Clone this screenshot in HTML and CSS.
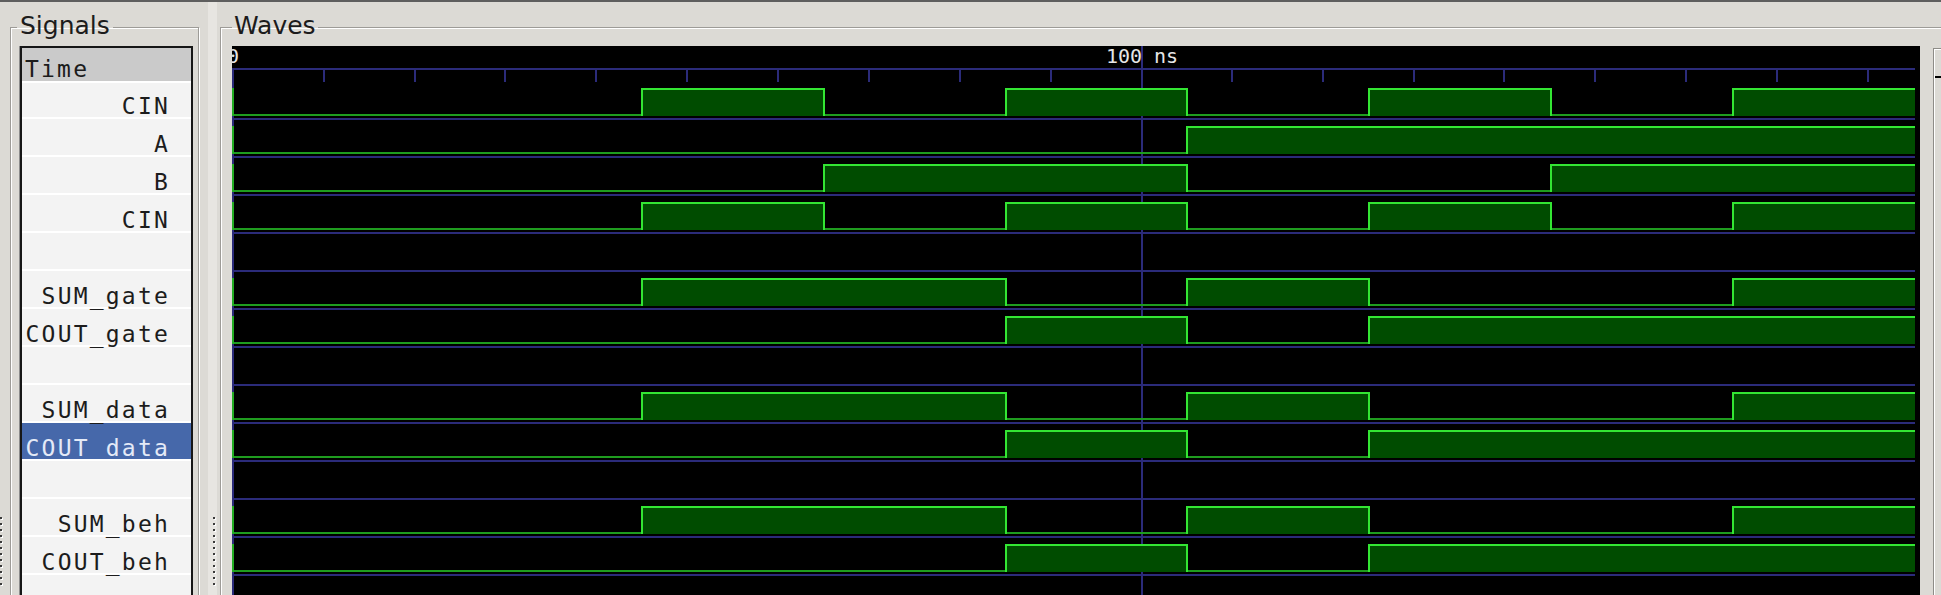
FILE: index.html
```html
<!DOCTYPE html>
<html>
<head>
<meta charset="utf-8">
<title>GTKWave</title>
<link rel="stylesheet" href="styles.css">
</head>
<body>
<div class="topline"></div>
<div class="main">
  <div class="grip grip-left">
    <i></i><i></i><i></i><i></i><i></i><i></i><i></i><i></i><i></i><i></i><i></i><i></i>
  </div>
  <fieldset class="frame signals">
    <legend>Signals</legend>
    <div class="siglist">
      <div class="row head">Time</div>
      <div class="row first">CIN</div>
      <div class="row">A</div>
      <div class="row">B</div>
      <div class="row">CIN</div>
      <div class="row"></div>
      <div class="row">SUM_gate</div>
      <div class="row">COUT_gate</div>
      <div class="row"></div>
      <div class="row">SUM_data</div>
      <div class="row selected">COUT_data</div>
      <div class="row"></div>
      <div class="row">SUM_beh</div>
      <div class="row">COUT_beh</div>
      <div class="row"></div>
    </div>
  </fieldset>
  <div class="paned">
    <div class="paned-light">
      <div class="grip grip-mid">
        <i></i><i></i><i></i><i></i><i></i><i></i><i></i><i></i><i></i><i></i><i></i><i></i>
      </div>
    </div>
  </div>
  <fieldset class="frame waves">
    <legend>Waves</legend>
    <div class="wavebox">
      <svg class="canvas" width="1688" height="560" viewBox="0 0 1688 560" xmlns="http://www.w3.org/2000/svg">
        <defs>
          <g id="w-cin">
            <path class="fill" d="M409 42H593V70H409Z M773 42H956V70H773Z M1136 42H1320V70H1136Z M1500 42H1683V70H1500Z"/>
            <path class="lo" d="M0 69H410 M592 69H774 M955 69H1137 M1319 69H1501"/>
            <path class="hi" d="M410 70V43H592V70 M774 70V43H955V70 M1137 70V43H1319V70 M1501 70V43H1683"/>
            <path class="init" d="M1 42V70"/>
          </g>
          <g id="w-a">
            <path class="fill" d="M954 42H1683V70H954Z"/>
            <path class="lo" d="M0 69H955"/>
            <path class="hi" d="M955 70V43H1683"/>
            <path class="init" d="M1 42V70"/>
          </g>
          <g id="w-b">
            <path class="fill" d="M591 42H956V70H591Z M1318 42H1683V70H1318Z"/>
            <path class="lo" d="M0 69H592 M955 69H1319"/>
            <path class="hi" d="M592 70V43H955V70 M1319 70V43H1683"/>
            <path class="init" d="M1 42V70"/>
          </g>
          <g id="w-sum">
            <path class="fill" d="M409 42H775V70H409Z M954 42H1138V70H954Z M1500 42H1683V70H1500Z"/>
            <path class="lo" d="M0 69H410 M774 69H955 M1137 69H1501"/>
            <path class="hi" d="M410 70V43H774V70 M955 70V43H1137V70 M1501 70V43H1683"/>
            <path class="init" d="M1 42V70"/>
          </g>
          <g id="w-cout">
            <path class="fill" d="M773 42H956V70H773Z M1136 42H1683V70H1136Z"/>
            <path class="lo" d="M0 69H774 M955 69H1137"/>
            <path class="hi" d="M774 70V43H955V70 M1137 70V43H1683"/>
            <path class="init" d="M1 42V70"/>
          </g>
        </defs>
        <path class="grid" d="M0 23H1683 M1 22V560 M910 0V560
          M92 24V36 M183 24V36 M273 24V36 M364 24V36 M455 24V36 M546 24V36 M637 24V36 M728 24V36 M819 24V36
          M1000 24V36 M1091 24V36 M1182 24V36 M1272 24V36 M1363 24V36 M1454 24V36 M1545 24V36 M1636 24V36
          M0 73H1683 M0 111H1683 M0 149H1683 M0 187H1683 M0 225H1683 M0 263H1683 M0 301H1683
          M0 339H1683 M0 377H1683 M0 415H1683 M0 453H1683 M0 491H1683 M0 529H1683 M0 567H1683"/>
        <text class="tl" x="1" y="17" text-anchor="middle">0</text>
        <text class="tl" x="910" y="17" text-anchor="middle">100 ns</text>
        <use href="#w-cin" y="0"/>
        <use href="#w-a" y="38"/>
        <use href="#w-b" y="76"/>
        <use href="#w-cin" y="114"/>
        <use href="#w-sum" y="190"/>
        <use href="#w-cout" y="228"/>
        <use href="#w-sum" y="304"/>
        <use href="#w-cout" y="342"/>
        <use href="#w-sum" y="418"/>
        <use href="#w-cout" y="456"/>
      </svg>
      <div class="vscroll"><div class="vscroll-slider"></div></div>
    </div>
  </fieldset>
</div>
</body>
</html>
```

FILE: styles.css
```css
html, body {
  margin: 0;
  padding: 0;
}

body {
  width: 1941px;
  height: 595px;
  overflow: hidden;
  background: #dcdad5;
  font-family: "DejaVu Sans", "Liberation Sans", sans-serif;
  color: #1c1c1c;
}

.topline {
  height: 2px;
  background: #5e5e5e;
}

.main {
  display: flex;
  align-items: flex-start;
  height: 593px;
}

/* paned grip dots */
.grip {
  display: flex;
  flex-direction: column;
  gap: 4px;
}

.grip i {
  display: block;
  width: 2px;
  height: 2px;
  background: #3a3a3a;
  box-shadow: 1px 1px 0 #ffffff;
}

.grip-left {
  flex: none;
  width: 10px;
  padding-top: 515px;
}

.grip-mid {
  padding-top: 515px;
  padding-left: 5px;
}

/* etched frames */
.frame {
  flex: none;
  margin: 9px 0 0 0;
  border: 1px solid #9d9b97;
  box-shadow: inset 1px 1px 0 #ffffff, 1px 1px 0 #ffffff;
  min-width: 0;
  height: 640px;
  box-sizing: border-box;
}

.frame legend {
  font-size: 25px;
  line-height: normal;
  color: #1c1c1c;
  padding: 0 3px 4px 3px;
}

.signals {
  width: 189px;
  padding: 2px 5px 0 6px;
}

.waves {
  width: 1760px;
  padding: 2px 0 0 11px;
}

.waves legend {
  padding-left: 2px;
  padding-right: 2px;
}

/* signal list */
.siglist {
  margin-left: 3px;
  width: 173px;
  height: 600px;
  box-sizing: border-box;
  border: 2px solid #161616;
  box-shadow: -1px 0 0 #8c8c8c;
  background: #ffffff;
  font-family: "DejaVu Sans Mono", "Liberation Mono", monospace;
  font-size: 23px;
  letter-spacing: 2.2px;
  white-space: nowrap;
}

.row {
  box-sizing: border-box;
  height: 36px;
  margin-bottom: 2px;
  padding: 12px 21px 0 0;
  line-height: 26px;
  background: #f3f3f3;
  text-align: right;
  color: #1c1c1c;
}

.row.head {
  height: 33px;
  padding: 8px 0 0 3px;
  text-align: left;
  background: #cacaca;
}

.row.first {
  height: 34px;
  padding-top: 10px;
}

.row.selected {
  background: #4668aa;
  color: #e4eaf7;
  overflow: hidden;
}

/* pane separator */
.paned {
  flex: none;
  width: 21px;
  align-self: stretch;
  display: flex;
}

.paned-light {
  margin-left: 9px;
  width: 9px;
  background: #e7e5e1;
}

/* waves */
.wavebox {
  display: flex;
  align-items: flex-start;
  gap: 13px;
}

.canvas {
  display: block;
  flex: none;
  background: #000000;
}

.canvas .grid {
  fill: none;
  stroke: #2b2b7a;
  stroke-width: 2;
  shape-rendering: crispEdges;
}

.canvas .fill {
  fill: #004c00;
  stroke: none;
  shape-rendering: crispEdges;
}

.canvas .hi {
  fill: none;
  stroke: #33e633;
  stroke-width: 2;
  shape-rendering: crispEdges;
}

.canvas .lo {
  fill: none;
  stroke: #1f9c1f;
  stroke-width: 2;
  shape-rendering: crispEdges;
}

.canvas .init {
  fill: none;
  stroke: #23ad23;
  stroke-width: 2;
  shape-rendering: crispEdges;
}

.canvas .tl {
  font-family: "DejaVu Sans Mono", "Liberation Mono", monospace;
  font-size: 20px;
  fill: #e6e6e6;
}

.vscroll {
  flex: none;
  margin-top: 2px;
  width: 30px;
  height: 560px;
  border-left: 1px solid #8e8c88;
  border-top: 1px solid #8e8c88;
  box-shadow: inset 1px 1px 0 #ffffff;
  box-sizing: border-box;
  padding: 27px 0 0 1px;
}

.vscroll-slider {
  height: 20px;
  border-top: 2px solid #000000;
}
```
